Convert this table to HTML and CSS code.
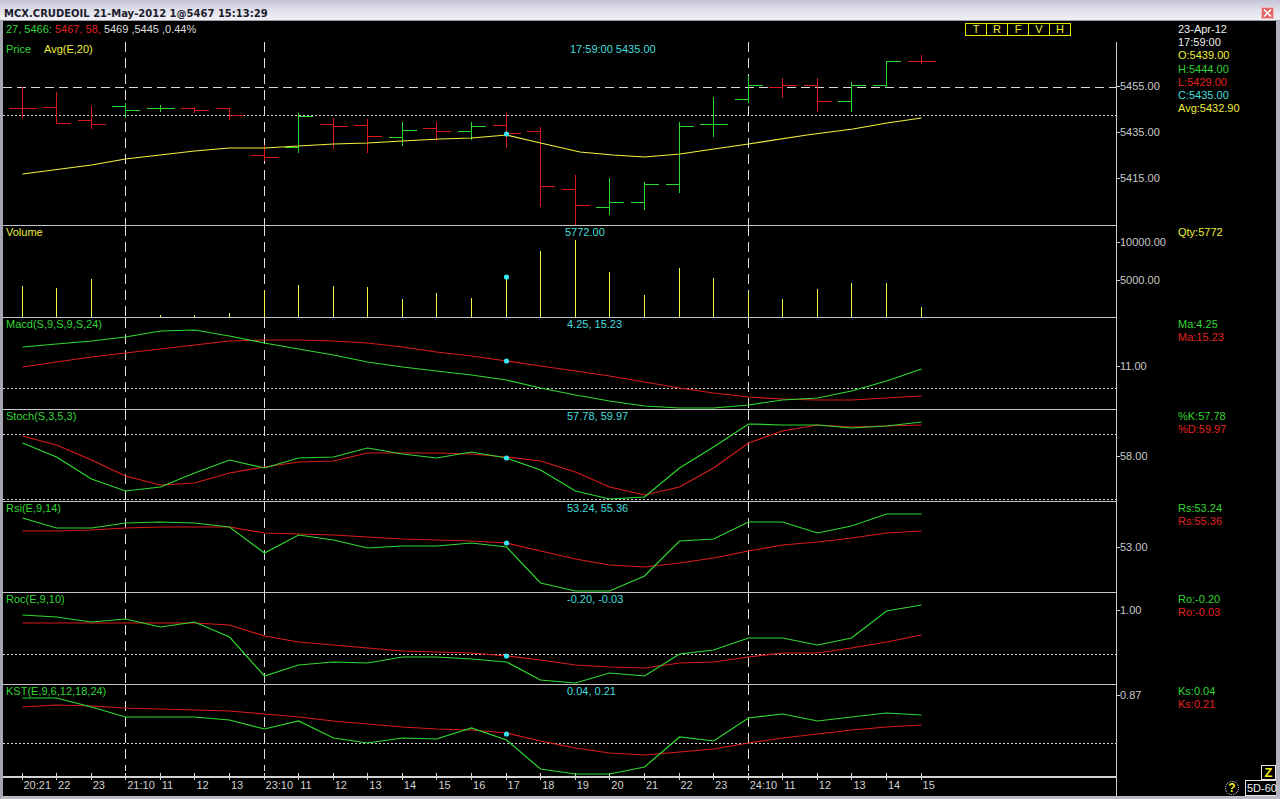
FILE: index.html
```html
<!DOCTYPE html>
<html>
<head>
<meta charset="utf-8">
<title>MCX.CRUDEOIL</title>
<link rel="stylesheet" href="styles.css">
</head>
<body>
<div class="window">
  <div class="titlebar">
    <span class="title">MCX.CRUDEOIL 21-May-2012 1@5467 15:13:29</span>
    <span class="close"><svg width="9" height="8" viewBox="0 0 9 8"><path d="M1 0.5L8 7.5M8 0.5L1 7.5" stroke="#fff" stroke-width="1.6"/></svg></span>
  </div>
  <div class="frame">
    <!-- PRICE -->
    <div class="row row-price">
      <div class="plot">
        <svg class="chart" width="1113" height="204" viewBox="3 21 1113 204">
          <path class="lvl-dash" d="M3 87.5H1116"/>
          <path class="lvl-dot" d="M3 115.5H1116"/>
          <path class="vdash" d="M125.5 42V225M264.5 42V225M748.5 42V225"/>
          <path class="bar-r" d="M22.5 87V118M8.5 108.5H36.5 M56.5 92V124M42.5 107.5H56.5M56.5 123.5H70.5 M91.5 106V129M77.5 120.5H91.5M91.5 124.5H105.5 M194.5 107V113M180.5 108.5H194.5M194.5 110.5H208.5 M229.5 108V120M215.5 108.5H229.5M229.5 115.5H243.5 M264.5 145V161M250.5 155.5H264.5M264.5 157.5H278.5 M333.5 118V149M319.5 124.5H333.5M333.5 126.5H347.5 M367.5 119V153M353.5 125.5H367.5M367.5 136.5H381.5 M436.5 122V141M422.5 128.5H436.5M436.5 131.5H450.5 M506.5 113V148M492.5 125.5H506.5M506.5 133.5H520.5 M540.5 127V207M526.5 131.5H540.5M540.5 186.5H554.5 M575.5 175V225M561.5 189.5H575.5M575.5 205.5H589.5 M782.5 78V98M768.5 87.5H782.5M782.5 85.5H796.5 M817.5 78V112M803.5 85.5H817.5M817.5 101.5H831.5 M921.5 55V64M907.5 61.5H935.5"/>
          <path class="bar-g" d="M125.5 103V118M111.5 106.5H125.5M125.5 110.5H139.5 M160.5 105V112M146.5 108.5H174.5 M298.5 113V153M284.5 147.5H298.5M298.5 116.5H312.5 M402.5 122V146M388.5 137.5H402.5M402.5 130.5H416.5 M471.5 122V140M457.5 131.5H471.5M471.5 126.5H485.5 M609.5 178V215M595.5 207.5H609.5M609.5 202.5H623.5 M644.5 182V210M630.5 202.5H644.5M644.5 184.5H658.5 M679.5 122V193M665.5 184.5H679.5M679.5 126.5H693.5 M713.5 97V137M699.5 124.5H727.5 M748.5 76V103M734.5 99.5H748.5M748.5 85.5H762.5 M851.5 82V112M837.5 101.5H851.5M851.5 85.5H865.5 M886.5 61V88M872.5 85.5H886.5M886.5 61.5H900.5"/>
          <polyline class="ln-y" points="22.5,174 91.5,165 125.5,159 194.5,151 229.5,148 264.5,148 298.5,146 333.5,144 367.5,143 402.5,141 440,139 471.5,138 506.5,135 540.5,143 580,152 613,155 645,157 680,154 707,150 748.5,144 807,135 853,129 887,123 921.5,118"/>
          <circle class="dot" cx="506.5" cy="134" r="2.6"/>
        </svg>
        <div class="stack">
          <div class="quote">
            <span class="qtext"><span class="g">27, 5466:</span> <span class="r">5467, 58,</span> <span class="w">5469 ,5445 ,0.44%</span></span>
            <div class="tools"><span>T</span><span>R</span><span>F</span><span>V</span><span>H</span></div>
          </div>
          <div class="head head-price">
            <span class="name name-price"><span class="g">Price</span><span class="y">Avg(E,20)</span></span>
            <span class="val c">17:59:00 5435.00</span>
          </div>
        </div>
      </div>
      <div class="scale s-price"><span>5455.00</span><span>5435.00</span><span>5415.00</span></div>
      <div class="legend legend-price">
        <span class="w">23-Apr-12</span>
        <span class="w">17:59:00</span>
        <span class="y">O:5439.00</span>
        <span class="g">H:5444.00</span>
        <span class="r">L:5429.00</span>
        <span class="c">C:5435.00</span>
        <span class="y">Avg:5432.90</span>
      </div>
    </div>

    <!-- VOLUME -->
    <div class="row pane">
      <div class="plot">
        <svg class="chart" width="1113" height="91" viewBox="3 226 1113 91">
          <path class="vdash" d="M125.5 226V317M264.5 226V317M748.5 226V317"/>
          <path class="vol" d="M22.5 317V286M56.5 317V288M91.5 317V279M160.5 317V315M194.5 317V315M229.5 317V313M264.5 317V290M298.5 317V285M333.5 317V286M367.5 317V287M402.5 317V299M436.5 317V293M471.5 317V298M506.5 317V277M540.5 317V251M575.5 317V240M609.5 317V272M644.5 317V295M679.5 317V268M713.5 317V278M748.5 317V292M782.5 317V299M817.5 317V289M851.5 317V283M886.5 317V283M921.5 317V307"/>
          <circle class="dot" cx="506.5" cy="277" r="2.6"/>
        </svg>
        <div class="head"><span class="name y">Volume</span><span class="val c val-vol">5772.00</span></div>
      </div>
      <div class="scale s-vol"><span>10000.00</span><span>5000.00</span></div>
      <div class="legend"><span class="y">Qty:5772</span></div>
    </div>

    <!-- MACD -->
    <div class="row pane">
      <div class="plot">
        <svg class="chart" width="1113" height="91" viewBox="3 318 1113 91">
          <path class="lvl-dot" d="M3 388.5H1116"/>
          <path class="vdash" d="M125.5 318V409M264.5 318V409M748.5 318V409"/>
          <polyline class="ln-r" points="22.5,367 56.5,362 91.5,357 125.5,353 160.5,349 194.5,345 229.5,341 264.5,340 298.5,340 333.5,341 367.5,343 402.5,347 436.5,352 471.5,356 506.5,361 540.5,366 575.5,371 609.5,376 644.5,382 679.5,388 713.5,393 748.5,397 782.5,399 817.5,400 851.5,400 886.5,398 921.5,396"/>
          <polyline class="ln-g" points="22.5,347 56.5,344 91.5,341 125.5,337 160.5,331 194.5,330 229.5,336 264.5,343 298.5,349 333.5,355 367.5,362 402.5,367 436.5,371 471.5,375 506.5,380 540.5,388 575.5,395 609.5,401 644.5,406 679.5,408 713.5,408 748.5,405 782.5,400 817.5,398 851.5,391 886.5,381 921.5,369"/>
          <circle class="dot" cx="506.5" cy="361" r="2.6"/>
        </svg>
        <div class="head"><span class="name g">Macd(S,9,S,9,S,24)</span><span class="val c">4.25, 15.23</span></div>
      </div>
      <div class="scale s-macd"><span>11.00</span></div>
      <div class="legend"><span class="g">Ma:4.25</span><span class="r">Ma:15.23</span></div>
    </div>

    <!-- STOCH -->
    <div class="row pane">
      <div class="plot">
        <svg class="chart" width="1113" height="91" viewBox="3 410 1113 91">
          <path class="lvl-dot" d="M3 434.5H1116M3 499.5H1116"/>
          <path class="vdash" d="M125.5 410V501M264.5 410V501M748.5 410V501"/>
          <polyline class="ln-r" points="22.5,436 56.5,445 91.5,460 125.5,476 160.5,485 194.5,483 229.5,473 264.5,467 298.5,462 333.5,461 367.5,453 402.5,453 436.5,453 471.5,454 506.5,457 540.5,461 575.5,472 609.5,487 644.5,495 679.5,487 713.5,468 748.5,443 782.5,431 817.5,425 851.5,427 886.5,426 921.5,425"/>
          <polyline class="ln-g" points="22.5,443 56.5,457 91.5,479 125.5,491 160.5,487 194.5,473 229.5,460 264.5,468 298.5,458 333.5,457 367.5,448 402.5,454 436.5,458 471.5,452 506.5,458 540.5,470 575.5,491 609.5,499 644.5,497 679.5,468 713.5,447 748.5,424 782.5,425 817.5,425 851.5,428 886.5,426 921.5,422"/>
          <circle class="dot" cx="506.5" cy="458" r="2.6"/>
        </svg>
        <div class="head"><span class="name g">Stoch(S,3,5,3)</span><span class="val c">57.78, 59.97</span></div>
      </div>
      <div class="scale s-stoch"><span>58.00</span></div>
      <div class="legend"><span class="g">%K:57.78</span><span class="r">%D:59.97</span></div>
    </div>

    <!-- RSI -->
    <div class="row pane row-rsi">
      <div class="plot">
        <svg class="chart" width="1113" height="90" viewBox="3 502 1113 90">
          <path class="vdash" d="M125.5 502V592M264.5 502V592M748.5 502V592"/>
          <polyline class="ln-r" points="22.5,531 56.5,531 91.5,530 125.5,528 160.5,527 194.5,527 229.5,527 264.5,533 298.5,534 333.5,535 367.5,537 402.5,539 436.5,540 471.5,541 506.5,543 540.5,551 575.5,559 609.5,565 644.5,567 679.5,563 713.5,558 748.5,551 782.5,545 817.5,542 851.5,538 886.5,533 921.5,531"/>
          <polyline class="ln-g" points="22.5,518 56.5,528 91.5,528 125.5,523 160.5,522 194.5,523 229.5,527 264.5,553 298.5,535 333.5,540 367.5,548 402.5,546 436.5,546 471.5,543 506.5,547 540.5,583 575.5,591 609.5,591 644.5,576 679.5,541 713.5,539 748.5,522 782.5,522 817.5,533 851.5,526 886.5,514 921.5,514"/>
          <circle class="dot" cx="506.5" cy="543" r="2.6"/>
        </svg>
        <div class="head"><span class="name g">Rsi(E,9,14)</span><span class="val c">53.24, 55.36</span></div>
      </div>
      <div class="scale s-rsi"><span>53.00</span></div>
      <div class="legend"><span class="g">Rs:53.24</span><span class="r">Rs:55.36</span></div>
    </div>

    <!-- ROC -->
    <div class="row pane">
      <div class="plot">
        <svg class="chart" width="1113" height="91" viewBox="3 593 1113 91">
          <path class="lvl-dot" d="M3 654.5H1116"/>
          <path class="vdash" d="M125.5 593V684M264.5 593V684M748.5 593V684"/>
          <polyline class="ln-r" points="22.5,623 56.5,623 91.5,623 125.5,623 160.5,623 194.5,623 229.5,625 264.5,636 298.5,642 333.5,645 367.5,648 402.5,651 436.5,652 471.5,653 506.5,656 540.5,660 575.5,665 609.5,667 644.5,668 679.5,663 713.5,662 748.5,657 782.5,653 817.5,653 851.5,648 886.5,642 921.5,635"/>
          <polyline class="ln-g" points="22.5,615 56.5,617 91.5,622 125.5,619 160.5,627 194.5,622 229.5,637 264.5,676 298.5,665 333.5,662 367.5,663 402.5,657 436.5,657 471.5,659 506.5,662 540.5,680 575.5,683 609.5,673 644.5,676 679.5,654 713.5,650 748.5,638 782.5,638 817.5,645 851.5,638 886.5,611 921.5,605"/>
          <circle class="dot" cx="506.5" cy="656" r="2.6"/>
        </svg>
        <div class="head"><span class="name g">Roc(E,9,10)</span><span class="val c">-0.20, -0.03</span></div>
      </div>
      <div class="scale s-roc"><span>1.00</span></div>
      <div class="legend"><span class="g">Ro:-0.20</span><span class="r">Ro:-0.03</span></div>
    </div>

    <!-- KST -->
    <div class="row pane">
      <div class="plot">
        <svg class="chart" width="1113" height="91" viewBox="3 685 1113 91">
          <path class="lvl-dot" d="M3 743.5H1116"/>
          <path class="vdash" d="M125.5 685V771M264.5 685V771M748.5 685V771"/>
          <path class="tick" d="M22.5 773V776M56.5 773V776M91.5 773V776M125.5 773V776M160.5 773V776M194.5 773V776M229.5 773V776M264.5 773V776M298.5 773V776M333.5 773V776M367.5 773V776M402.5 773V776M436.5 773V776M471.5 773V776M506.5 773V776M540.5 773V776M575.5 773V776M609.5 773V776M644.5 773V776M679.5 773V776M713.5 773V776M748.5 773V776M782.5 773V776M817.5 773V776M851.5 773V776M886.5 773V776M921.5 773V776"/>
          <polyline class="ln-r" points="22.5,707 56.5,705 91.5,706 125.5,708 160.5,709 194.5,710 229.5,711 264.5,714 298.5,717 333.5,721 367.5,724 402.5,727 436.5,729 471.5,730 506.5,733 540.5,741 575.5,748 609.5,753 644.5,755 679.5,752 713.5,749 748.5,743 782.5,738 817.5,734 851.5,730 886.5,727 921.5,725"/>
          <polyline class="ln-g" points="22.5,698 56.5,698 91.5,707 125.5,717 160.5,717 194.5,717 229.5,720 264.5,729 298.5,721 333.5,738 367.5,743 402.5,738 436.5,739 471.5,728 506.5,740 540.5,769 575.5,774 609.5,774 644.5,767 679.5,737 713.5,741 748.5,718 782.5,714 817.5,721 851.5,717 886.5,713 921.5,715"/>
          <circle class="dot" cx="506.5" cy="734" r="2.6"/>
        </svg>
        <div class="head"><span class="name g">KST(E,9,6,12,18,24)</span><span class="val c">0.04, 0.21</span></div>
      </div>
      <div class="scale s-kst"><span>0.87</span></div>
      <div class="legend"><span class="g">Ks:0.04</span><span class="r">Ks:0.21</span></div>
    </div>

    <!-- TIME AXIS -->
    <div class="row row-time">
      <div class="plot timeaxis">
        <svg class="chart" width="1113" height="18" viewBox="3 778 1113 18">
          <path class="tick" d="M22.5 778V780M56.5 778V780M91.5 778V780M125.5 778V780M160.5 778V780M194.5 778V780M229.5 778V780M264.5 778V780M298.5 778V780M333.5 778V780M367.5 778V780M402.5 778V780M436.5 778V780M471.5 778V780M506.5 778V780M540.5 778V780M575.5 778V780M609.5 778V780M644.5 778V780M679.5 778V780M713.5 778V780M748.5 778V780M782.5 778V780M817.5 778V780M851.5 778V780M886.5 778V780M921.5 778V780"/>
        </svg>
        <div class="tlabels">
          <span>20:21</span><span>22</span><span>23</span><span>21:10</span><span>11</span><span>12</span><span>13</span><span>23:10</span><span>11</span><span>12</span><span>13</span><span>14</span><span>15</span><span>16</span><span>17</span><span>18</span><span>19</span><span>20</span><span>21</span><span>22</span><span>23</span><span>24:10</span><span>11</span><span>12</span><span>13</span><span>14</span><span>15</span>
        </div>
      </div>
      <div class="scale"></div>
      <div class="legend"></div>
    </div>
  </div>

  <div class="corner">
    <span class="zbtn">Z</span>
    <div class="corner-row">
      <span class="help">?</span>
      <span class="period">5D-60</span>
    </div>
  </div>
</div>
</body>
</html>
```

FILE: styles.css
```css
* {
  box-sizing: border-box;
  margin: 0;
  padding: 0;
}

html, body {
  width: 1280px;
  height: 799px;
  overflow: hidden;
  background: #000;
}

body {
  font-family: "Liberation Sans", Arial, sans-serif;
  font-size: 11px;
  line-height: 13px;
  color: #e4e4e4;
}

.window {
  position: relative;
  width: 1280px;
  height: 799px;
  display: flex;
  flex-direction: column;
}

/* title bar */
.titlebar {
  height: 21px;
  flex: none;
  display: flex;
  justify-content: space-between;
  align-items: flex-start;
  padding: 0 6px 0 4px;
  background: linear-gradient(#c4c4d6, #dedeea 45%, #f0f0f5);
  border-bottom: 1px solid #9a9aac;
}

.title {
  font-family: "DejaVu Sans", Verdana, sans-serif;
  font-weight: bold;
  font-size: 10px;
  line-height: 12px;
  padding-top: 8px;
  color: #1c1c2c;
  white-space: nowrap;
}

.close {
  margin-top: 7px;
  width: 13px;
  height: 12px;
  background: #e06464;
  border: 1px solid #f3b8b8;
  display: flex;
  align-items: center;
  justify-content: center;
}

.close svg {
  display: block;
}

/* frame */
.frame {
  flex: 1;
  display: flex;
  flex-direction: column;
  border-left: 3px solid #a6a6b2;
  border-right: 4px solid #b2b2be;
  border-bottom: 3px solid #b8b8c2;
}

.row {
  display: flex;
  flex: none;
}

.row-price { height: 204px; }
.pane { height: 92px; }
.row-rsi { height: 91px; }
.row-time { height: 20px; }

.plot {
  width: 1113px;
  flex: none;
  display: grid;
  overflow: hidden;
}

.plot > * {
  grid-area: 1 / 1;
}

.pane .plot {
  border-top: 1px solid #c6c6c6;
}

.timeaxis {
  border-top: 2px solid #d2d2d2;
}

.chart {
  display: block;
  shape-rendering: crispEdges;
}

.chart polyline,
.chart circle {
  shape-rendering: auto;
}

/* svg strokes */
.lvl-dash { stroke: #d8d8d8; stroke-width: 1; stroke-dasharray: 9 5; fill: none; }
.lvl-dot { stroke: #d8d8d8; stroke-width: 1; stroke-dasharray: 2 2; fill: none; }
.vdash { stroke: #e0e0e0; stroke-width: 1; stroke-dasharray: 10 6; fill: none; }
.bar-r { stroke: #dc1818; stroke-width: 1; fill: none; }
.bar-g { stroke: #2ed82e; stroke-width: 1; fill: none; }
.vol { stroke: #f0f040; stroke-width: 1; fill: none; }
.tick { stroke: #d2d2d2; stroke-width: 1; fill: none; }
.ln-y { stroke: #f0f040; stroke-width: 1.2; fill: none; }
.ln-r { stroke: #d81c1c; stroke-width: 1.2; fill: none; }
.ln-g { stroke: #30d830; stroke-width: 1.2; fill: none; }
.dot { fill: #38e6f0; }

/* text colours */
.g { color: #34d434; }
.r { color: #e02222; }
.y { color: #ecec3e; }
.c { color: #46dcdc; }
.w { color: #ececec; }

/* pane heads */
.stack {
  display: flex;
  flex-direction: column;
}

.quote {
  height: 16px;
  display: flex;
  align-items: center;
  padding-left: 3px;
}

.qtext .w {
  color: #dcdcdc;
}

.tools {
  display: flex;
  margin-left: auto;
  margin-right: 45px;
}

.tools span {
  width: 22px;
  height: 13px;
  margin-left: -1px;
  border: 1px solid #e6e600;
  color: #ecec30;
  display: flex;
  align-items: center;
  justify-content: center;
  font-size: 11px;
}

.head {
  display: flex;
  height: 13px;
  align-self: start;
}

.head-price {
  margin-top: 6px;
}

.name {
  width: 564px;
  flex: none;
  padding-left: 3px;
  white-space: nowrap;
}

.name-price {
  display: flex;
  gap: 13px;
  width: 567px;
}

.val {
  white-space: nowrap;
}

.val-vol {
  margin-left: -2px;
}

/* right scale */
.scale {
  width: 59px;
  flex: none;
  border-left: 1px solid #cdcdcd;
  display: flex;
  flex-direction: column;
  color: #c8c8c8;
}

.scale span {
  display: flex;
  align-items: center;
  height: 13px;
}

.scale span::before {
  content: "";
  width: 3px;
  height: 1px;
  background: #cdcdcd;
}

.s-price { margin-top: 21px; padding-top: 38px; gap: 33px; }
.s-vol { padding-top: 11px; gap: 25px; }
.s-macd { padding-top: 43px; }
.s-stoch { padding-top: 41px; }
.s-rsi { padding-top: 40px; }
.s-roc { padding-top: 12px; }
.s-kst { padding-top: 5px; }

/* legend */
.legend {
  width: 101px;
  flex: none;
  display: flex;
  flex-direction: column;
  padding: 1px 0 0 3px;
  white-space: nowrap;
}

.legend-price {
  padding-top: 2px;
  line-height: 13.2px;
}

/* time axis labels */
.tlabels {
  display: flex;
  padding-left: 20.5px;
  padding-top: 1px;
  color: #d0d0d0;
}

.tlabels span {
  width: 34.58px;
  flex: none;
  white-space: nowrap;
}

/* bottom-right controls */
.corner {
  position: absolute;
  right: 4px;
  bottom: 3px;
  display: flex;
  flex-direction: column;
  align-items: flex-end;
}

.zbtn {
  width: 15px;
  height: 15px;
  border: 1px solid #e4e4e4;
  color: #f0f020;
  font-weight: bold;
  font-size: 13px;
  line-height: 13px;
  text-align: center;
}

.corner-row {
  display: flex;
  align-items: center;
  gap: 6px;
  height: 16px;
}

.help {
  width: 14px;
  height: 14px;
  border: 1px dotted #e0e0e0;
  border-radius: 50%;
  color: #f0f020;
  font-weight: bold;
  font-size: 12px;
  line-height: 12px;
  text-align: center;
}

.period {
  width: 31px;
  height: 16px;
  border: 1px solid #e4e4e4;
  border-right: none;
  white-space: nowrap;
  color: #f0f0f0;
  font-size: 11px;
  line-height: 14px;
  padding-left: 1px;
}
```
